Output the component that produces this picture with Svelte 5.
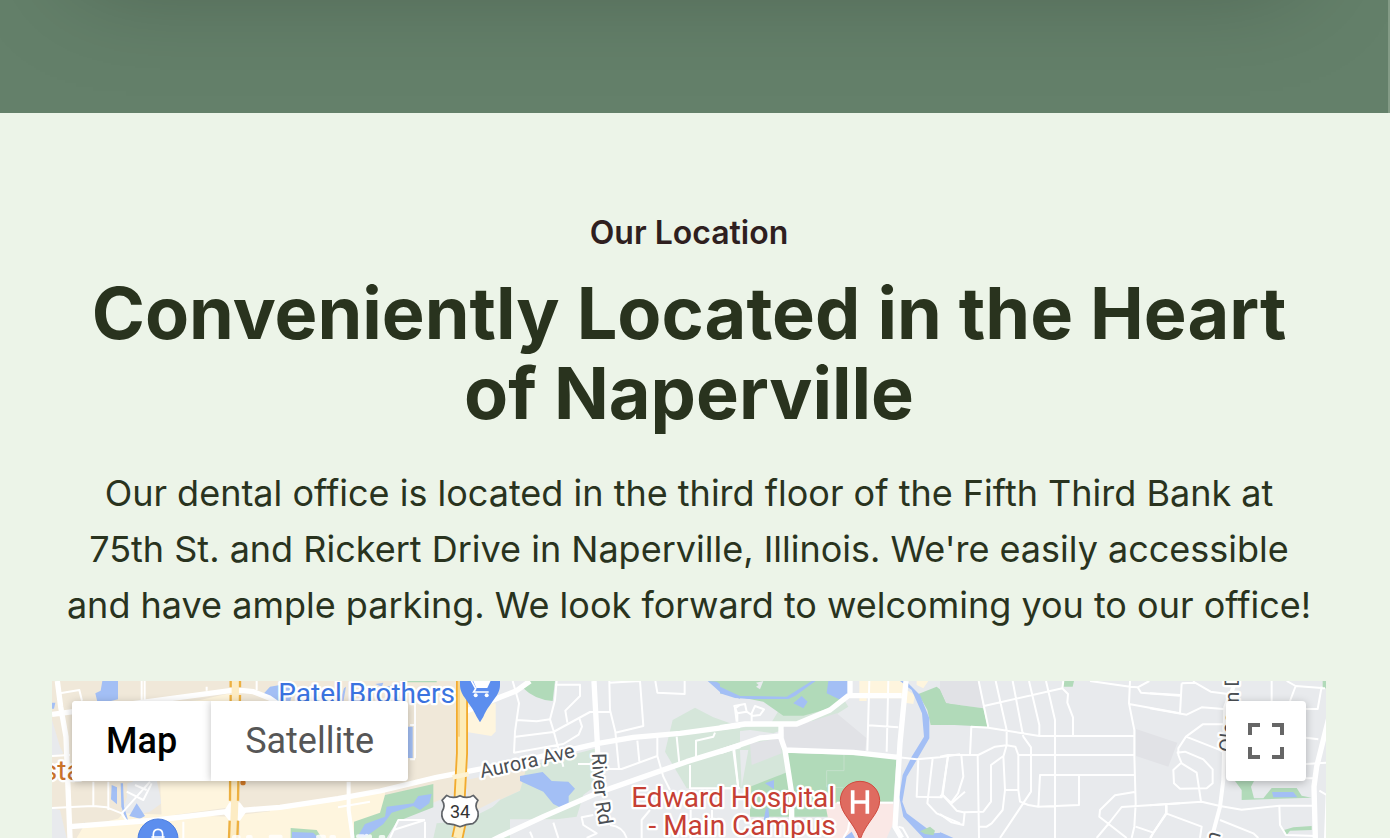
<script>
  let view = $state('map');
</script>

<div class="page">
  <div class="banner"><div class="card"></div></div>
  <section class="location">
    <header>
      <p class="eyebrow">Our Location</p>
      <h2>Conveniently Located in the Heart of Naperville</h2>
      <p class="copy">Our dental office is located in the third floor of the Fifth Third Bank at 75th St. and Rickert Drive in Naperville, Illinois. We're easily accessible and have ample parking. We look forward to welcoming you to our office!</p>
    </header>
    <div class="map">
      <svg class="tiles" viewBox="0 0 3822 471" preserveAspectRatio="xMidYMin slice" role="img" aria-label="Map of Naperville">
        <rect width="3822" height="471" fill="#e8eaed" />

        <!-- West: commercial blocks -->
        <g transform="translate(-36 -33)">
          <path class="sand" d="M0 0H1270V190L1344 330 1150 410 900 520H0Z" />
          <path class="gray" d="M36 150 60 230 70 250 36 260ZM36 415 60 420 80 504H36ZM280 330H350L365 400 330 425 265 440 245 425ZM262 340 300 330 320 420 260 430Z" />
          <path class="cream" d="M360 330H570V412L365 440ZM250 430 570 440V504H180ZM430 95H570V70L480 90ZM600 435 720 420 1036 360 1020 504H600ZM130 470 240 445 200 504H110Z" />
          <path class="water" d="M187 33H234V88L204 95H172L166 70 182 62ZM36 98H46L42 116H36ZM215 345 231 352V403L213 388ZM242 340H249L252 410 267 460 258 450 244 410ZM290 400 315 438 300 446 268 438ZM104 468 135 458V472ZM690 50 720 45 760 52 750 100H712L670 72Z" />
        </g>

        <!-- Aurora Ave and Route 34 -->
        <g transform="translate(654 -33)">
          <path class="gray" d="M610 33H720V340L600 380 590 325 585 180 670 198 678 160V100L600 95Z" />
          <path class="sand" d="M590 330 700 305 750 340 690 385 600 430Z" />
          <path class="gray" d="M345 504 420 460 520 450 720 400V504Z" />
          <path class="cream" d="M592 100H677V185L664 198 590 186Z" />
          <path class="cream" d="M245 385 345 372 335 430 248 450ZM0 415 235 395V504H0Z" />
          <path class="mint" d="M610 440 720 385V504H490L500 460 610 450Z" />
          <path class="park" d="M345 375 490 342V412L380 455 350 504H252V455L330 428ZM62 474 140 480 155 504H62ZM400 33H500V37H405Z" />
          <path class="water" d="M350 410 430 400 445 378 485 372 478 400 450 420 430 408 365 428 340 462 285 502H262L285 462 345 440ZM66 486 130 488 145 504H66ZM413 170H428V264H413ZM0 52 20 58 40 95H0ZM316 42 340 38 335 52 412 40 405 60 360 70 345 55ZM222 55 228 50 220 95H210Z" />
        </g>

        <!-- River Rd -->
        <g transform="translate(1344 -33)">
          <path class="sand" d="M0 310 80 303 85 330 60 362 0 390Z" />
          <path class="mint" d="M80 290 290 235V345L250 375 230 440 170 448H-60L0 390 60 362Z" />
          <path class="mint" d="M518 150 585 113 640 142 720 170V355H560L495 245Z" />
          <path class="park" d="M70 55 90 33H165L158 93Q105 90 70 55ZM625 33H720V82L665 62Z" />
          <path class="water" d="M60 318 128 306 155 333 205 335 225 356 206 378V410L190 417 160 402 130 365 60 333ZM623 33 650 35 680 56 720 72V86L660 66Z" />
        </g>

        <!-- Hospital and riverwalk -->
        <g transform="translate(2004 -33)">
          <path class="mint" d="M-70 165 0 178 150 165 180 115 250 110 360 70 385 110 330 145 240 160 160 190 90 180 0 190V355H120L180 315 200 310V260L180 195 110 205 0 245H-100Z" />
          <path class="shade" d="M190 165 240 165 350 130 440 205 435 245 195 235ZM90 220 180 205 185 250 95 285Z" />
          <path class="gray" d="M60 240H85L65 350Z" />
          <path class="park" d="M0 33H385V75L330 115 250 137H190L130 95 0 70ZM202 248 530 260 520 395H355L325 440H90V350L205 305ZM595 72 650 50 665 62 690 103 720 105V165H632L622 120Z" />
          <path class="gray" d="M108 38 130 33 120 58 108 50 116 45Z" />
          <path class="cream" d="M418 33H555V85H440V93H418ZM560 60 585 75 580 102 555 98ZM590 33H625L610 55 590 45Z" />
          <path class="rose" d="M315 398H520V460L500 504H330L325 450Z" />
          <path class="water" d="M0 50 60 78 200 80 275 33H287L225 78 205 87H90L45 84 0 70ZM325 33H385V72L362 90 320 70ZM220 100 245 78 263 95 250 115ZM135 340 162 330V358ZM138 415 145 415 148 440 125 480ZM372 504 395 485 405 504ZM540 33H558L600 75 628 145V205L590 270 560 320 547 395 560 430 640 490 665 488 700 504H610L550 440 538 380 548 315 575 260 612 200 606 130 575 60Z" />
          <path class="park" d="M600 484 630 470 645 482 640 496 615 492Z" />
          <path d="M320 352V302H372V255M345 352H370" fill="none" stroke="#cfe3d3" stroke-width="2" />
        </g>

        <!-- Eastern neighbourhoods -->
        <g transform="translate(2664 -33)">
          <path class="shade" d="M0 33H115L130 115 18 100 0 60ZM588 177 712 218 685 290 588 258Z" />
          <path class="park" d="M0 60 18 100 130 115 143 170 0 163ZM370 33H402L398 50H370Z" />
          <path class="water" d="M0 486 20 504H0Z" />
        </g>
        <g transform="translate(3294 -33)">
          <path class="park" d="M255 333H312L303 350 312 385H340L365 354H440L455 377 485 383 275 390V360ZM402 480 430 472 485 468V480L420 482 410 495ZM518 33H530V55H518Z" />
          <path class="water" d="M366 366H430L442 382H370Z" />
        </g>

        <!-- Streets -->
        <g class="roads">
          <g transform="translate(-36 -33)">
            <path class="major" d="M52 33 62 110 78 200 90 504M36 133 100 125 570 62H610L640 65 690 85 740 120M90 470 350 450 560 425 720 412 894 386 1020 363 1190 322 1400 282" />
            <path d="M60 70 118 60 126 92M305 33V95M314 33V95M36 258 90 255M36 414 110 410 160 408 200 412 245 430M160 335V410M205 335V420M330 335 245 430 265 460M260 365 310 390 335 340M285 345 320 360M430 455V504M650 33V60M500 50V62M894 412 990 395M1125 105V265M1110 165H1125M1110 268H1125M1155 450H1075L1050 504M1155 450 1060 480M1155 455V504" />
            <path class="medium" d="M926 335V420L938 504" />
            <path class="crossing" d="M570 400H598L616 424 598 450H570L552 428Z" />
          </g>
          <g transform="translate(1344 -33)">
            <path class="major" d="M-130 135 0 82 50 62 90 33M282 33 292 220 295 340M100 265 295 220 400 202 540 190 720 166M-60 530 0 500 130 440 290 370 560 275 720 226" />
            <path d="M38 33 57 100 45 185 42 250M170 33 165 90 150 148 160 180 178 245 190 290M165 44H240V78L196 122 202 158M50 150 110 154 150 148M47 200 160 186 270 126H330M238 145 246 170 236 194 190 222 42 248M328 33 330 120 346 185 357 297M328 38 420 33 430 168 346 188M466 33 472 68 554 72V33M412 212 418 274M300 297H365L472 258M472 200V258L490 320 510 360M530 200 538 280M645 188 640 200 588 212V262M570 285V355H720M700 240 715 355M280 435 245 442 250 465 290 490 260 504M330 465Q370 470 380 504M160 458 175 504M90 485 98 504M450 420 425 450V504M234 282H280M572 420V504M636 420V470M720 105 705 115 710 155" />
          </g>
          <g transform="translate(2004 -33)">
            <path class="major" d="M0 173 75 162H230L330 120 385 77H545M390 33V75M183 165V205L195 240 215 370V460M0 245 120 204 182 198M192 240 400 247 535 262M558 33 540 220 525 470 545 504" />
            <path d="M448 33 442 242M505 33 500 245M445 166 535 172M43 108 75 102 80 125 52 130ZM95 130 105 108 132 118 120 135 95 138ZM80 125 95 135M52 130V155M95 138V155M43 240 55 355M0 355H55M535 262 590 268 660 262 720 253M595 268 590 380 665 382 685 255M638 265 622 400 650 430 720 460M668 375 695 400 735 365M350 398H520M388 455 384 480 370 504M535 470 548 474 565 504" />
          </g>
          <g transform="translate(2664 -33)">
            <path d="M116 33 145 172M167 33 200 180V225L190 260M218 33 246 180 250 200 273 232V365L180 504M267 33 298 165V196M318 33 345 150V504M370 33 367 55 384 72 382 98 399 142V196M132 108 367 55M90 255 94 170 145 173 298 198H583M0 260 24 255H115L165 230 200 226 226 230 235 255H583M24 255 8 375 50 422 70 427 130 425 153 395V285L190 258 195 360 188 420 155 460 140 470H118M64 255 70 320 54 370 32 400M113 255 117 504M195 360H235V255M235 360 240 395 265 405 295 410 417 405V315M583 315H300L295 410M0 378 10 375M0 432 35 457 70 465 74 427M450 33 570 50 593 52 628 33M570 33 567 100 583 180V255L587 400 583 470 575 504M567 102 720 130M593 52 603 68 720 77M583 366 525 376 480 420 478 440 560 504M720 400 545 411 505 462 470 504M587 470 640 488 680 430V404M640 488 632 504" />
          </g>
          <g transform="translate(3294 -33)">
            <path class="medium" d="M258 33 226 110 220 330 210 410 185 504" />
            <path class="major" d="M540 130 500 290 492 350 496 504" />
            <path d="M95 40 90 130M0 70 90 75M95 40 135 38 182 65 240 73M130 33 135 40M0 115 110 134 155 112 230 118M230 163H158L108 200 85 235V255L95 280 140 308 153 395M108 200 230 248M80 248 105 245 160 268 188 298V340L170 355 90 356 72 340 70 300 92 280M0 406 155 395 210 408 275 419 388 407H490M48 404V430L0 504M48 430 155 470 150 504M210 450 310 490 325 504M388 407 390 465 408 495 500 498M365 33V93M410 33 437 48 525 55M437 48 420 93M515 50 503 117H468M468 203 505 208M468 282 530 278M468 325H490M508 362 530 375 525 504" />
          </g>
        </g>

        <!-- Highways -->
        <g class="highway" transform="translate(-36 -33)">
          <path class="lane" d="M586 33 584 400 580 504" />
          <path class="amber" d="M572 33V52M572 75 570 392M600 33V52M600 75 594 392M569 452 567 504M594 452 592 504" />
        </g>
        <g transform="translate(654 -33)">
          <path d="M576 33V250L568 400 576 440 562 504" fill="none" stroke="#f2ab2e" stroke-width="36" />
          <path d="M576 33V250L568 400 576 440 562 504" fill="none" stroke="#fdecb8" stroke-width="25" />
          <path d="M567 33V200" fill="none" stroke="#f5bd58" stroke-width="3" />
          <path d="M548 322 596 312" stroke="#fdf2d2" stroke-width="14" />
        </g>

        <!-- Labels -->
        <g class="labels">
          <path d="M546 468H560M588 468H596M656 467H686M798 467H816M838 468H846M918 466H934M944 464V471M954 466V471M986 468H994" fill="none" stroke="#fff" stroke-width="12" stroke-linecap="round" opacity=".8" />
          <g transform="translate(-36 -33)">
            <text class="place food" x="125" y="331" text-anchor="end">Costa</text>
            <circle cx="609" cy="338" r="8" fill="#d27a27" />
            <circle cx="354" cy="507" r="60" fill="#5c8eee" stroke="#4a7de0" stroke-width="3" />
            <path d="M340 504V494Q340 478 354 478T368 494V504M334 501H374" fill="none" stroke="#fff" stroke-width="5" />
          </g>
          <g transform="translate(654 -33)">
            <text class="place shop" x="25" y="100">Patel Brothers</text>
            <path d="M570 28H690V45C690 78 660 95 640 140L630 157 620 140C600 95 570 78 570 45Z" fill="#5c8eee" />
            <path d="M608 30H663L652 54H619Z" fill="#fff" />
            <path d="M603 30 617 56 611 66H656" fill="none" stroke="#fff" stroke-width="5" />
            <circle cx="617" cy="76" r="6" fill="#fff" /><circle cx="650" cy="76" r="6" fill="#fff" />
            <path d="M530 376Q548 388 570 377 592 388 610 376L624 391Q612 407 624 425 628 450 608 461 588 462 570 470 552 462 532 461 512 450 516 425 528 407 516 391Z" fill="#fff" stroke="#5f6368" stroke-width="5" stroke-linejoin="round" />
            <text class="shield" x="570" y="445">34</text>
          </g>
          <g transform="translate(1344 -33)">
            <path id="aurora" d="M-56 324Q100 293 260 252" fill="none" />
            <path id="river" d="M276 250Q278 370 302 490" fill="none" />
            <text class="street"><textPath href="#aurora">Aurora Ave</textPath></text>
            <text class="street"><textPath href="#river">River Rd</textPath></text>
          </g>
          <g transform="translate(2004 -33)">
            <text class="place health" x="345" y="410" text-anchor="end">Edward Hospital</text>
            <text class="place health" x="347" y="494" text-anchor="end">- Main Campus</text>
            <path d="M420 334C454 334 479 360 479 392 479 432 438 455 420 510 402 455 361 432 361 392 361 360 386 334 420 334Z" fill="#df6b60" stroke="#d04a3e" stroke-width="3" />
            <path d="M398 361V431M442 361V431M398 396H442" stroke="#fff" stroke-width="11" />
          </g>
          <g transform="translate(3294 -33)">
            <path id="olesen" d="M248 248 266 90 268 -160" fill="none" />
            <text class="street"><textPath href="#olesen">Olesen Dr</textPath></text>
            <text class="street" transform="translate(204 523) rotate(-75)">n</text>
          </g>
        </g>
      </svg>

      <div class="controls">
        <div class="types">
          <button class:active={view === 'map'} onclick={() => (view = 'map')}>Map</button>
          <button class:active={view === 'satellite'} onclick={() => (view = 'satellite')}>Satellite</button>
        </div>
        <button class="full" aria-label="Toggle fullscreen view">
          <svg viewBox="0 0 18 18" width="36" height="36" fill="#666"><path d="M0 0v6h2V2h4V0zM18 0h-6v2h4v4h2zM16 12v4h-4v2h6v-6zM2 12H0v6h6v-2H2z" /></svg>
        </button>
      </div>
    </div>
  </section>
</div>

<style>
  :global(body) { margin: 0; background: #ecf4e8; }
  .page {
    display: flex;
    flex-direction: column;
    height: 100vh;
    overflow: hidden;
    font-family: Inter, sans-serif;
    color: #29331e;
  }
  .banner {
    flex: none;
    height: 113px;
    overflow: hidden;
    background: #64806a;
    border-right: 2px solid #839b86;
  }
  .card {
    height: 400px;
    margin: -444px 64px 0 52px;
    box-shadow: 0 50px 100px -24px rgb(0 0 0 / 25%);
  }
  .location {
    display: flex;
    flex: 1;
    flex-direction: column;
    padding: 96px 64px 0 52px;
    background: #ecf4e8;
  }
  header { text-align: center; }
  p, h2 { margin: 0; }
  .eyebrow {
    font-size: 32px;
    font-weight: 600;
    line-height: 48px;
    color: #2f1f1f;
  }
  h2 {
    margin-top: 16px;
    font-size: 72px;
    font-weight: 700;
    line-height: 80px;
  }
  .copy {
    margin-top: 32px;
    font-size: 36px;
    line-height: 56px;
    text-wrap: balance;
  }
  .map {
    position: relative;
    flex: 1;
    min-height: 157px;
    margin-top: 48px;
    overflow: hidden;
    font-family: Roboto, sans-serif;
  }
  .tiles {
    position: absolute;
    inset: 0;
    width: 100%;
    height: 100%;
  }
  .sand { fill: #f0e8d9; }
  .cream { fill: #fef5de; }
  .gray { fill: #e8eaed; }
  .shade { fill: #e1e2e6; }
  .mint { fill: #d5e6da; }
  .park { fill: #b1dab9; }
  .water { fill: #a3bff5; }
  .rose { fill: #fae8e6; }
  .roads path {
    fill: none;
    stroke: #fff;
    stroke-width: 6;
    stroke-linejoin: round;
  }
  .roads path.medium { stroke-width: 12; }
  .roads path.major { stroke-width: 16; }
  .roads path.crossing { fill: #fff; }
  .highway path { fill: none; }
  .highway .lane { stroke: #fdecc4; stroke-width: 22; }
  .highway .amber { stroke: #edb040; stroke-width: 7; }
  .labels text {
    paint-order: stroke;
    stroke: #fff;
    stroke-width: 14;
    stroke-linejoin: round;
  }
  .labels .place { font-size: 84px; }
  .labels .food { fill: #c9722a; }
  .labels .shop { fill: #3a73e0; }
  .labels .health { fill: #c63f34; }
  .labels .street { font-size: 60px; fill: #4b4f54; }
  .labels .shield {
    font-size: 54px;
    text-anchor: middle;
    fill: #333;
    stroke: none;
  }
  .controls {
    position: relative;
    display: flex;
    justify-content: space-between;
    padding: 20px;
  }
  .types {
    display: flex;
    border-radius: 4px;
    background: #fff;
    box-shadow: 0 2px 8px rgb(0 0 0 / 25%);
    overflow: hidden;
  }
  button {
    height: 80px;
    padding: 0 34px;
    border: 0;
    background: #fff;
    font-family: Roboto, sans-serif;
    font-size: 36px;
    color: #565656;
    cursor: pointer;
  }
  .types button + button { box-shadow: 0 0 8px rgb(0 0 0 / 25%); }
  .types .active { font-weight: 500; color: #000; }
  .full {
    display: grid;
    place-items: center;
    width: 80px;
    padding: 0;
    border-radius: 4px;
    box-shadow: 0 2px 8px rgb(0 0 0 / 25%);
  }
</style>
